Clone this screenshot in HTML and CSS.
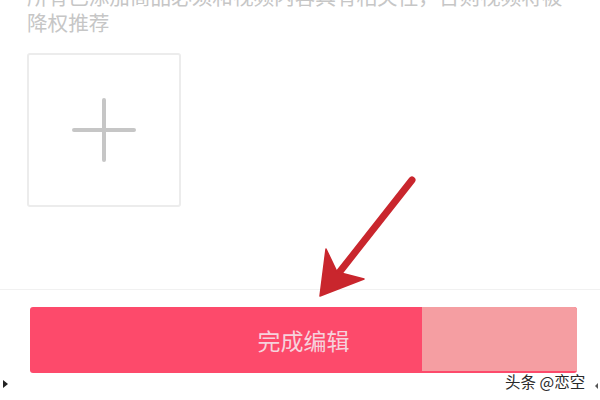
FILE: index.html
```html
<!DOCTYPE html>
<html lang="zh">
<head>
<meta charset="utf-8">
<link rel="stylesheet" href="styles.css">
</head>
<body>
<div class="page">
  <div class="content">
    <p class="desc">所有已添加商品必须和视频内容具有相关性，否则视频将被<br>降权推荐</p>
    <div class="upload">
      <svg class="plus" width="64" height="64" viewBox="0 0 64 64">
        <path d="M32 2 V62 M2 32 H62" stroke="#c6c6c6" stroke-width="4" stroke-linecap="round" fill="none"/>
      </svg>
    </div>
  </div>
  <div class="divider"></div>
  <div class="footer">
    <button class="done">完成编辑<span class="patch"></span></button>
  </div>
  <span class="watermark">头条 @恋空</span>
  <span class="mark mark-left"></span>
  <span class="mark mark-right"></span>
  <svg class="arrow" width="600" height="400" viewBox="0 0 600 400">
    <path d="M412 180 L338 274" stroke="#c9262d" stroke-width="7" stroke-linecap="round" fill="none"/>
    <path d="M320 296 L326 249 L337 272 L364 279 Z" fill="#c9262d" stroke="#c9262d" stroke-width="1.5" stroke-linejoin="round"/>
  </svg>
</div>
</body>
</html>
```
FILE: styles.css
```css
html, body {
  margin: 0;
  padding: 0;
  background: #ffffff;
}
.page {
  position: relative;
  width: 600px;
  height: 400px;
  overflow: hidden;
  font-family: "Noto Sans CJK SC", "Noto Sans", sans-serif;
}
.content {
  padding-left: 27px;
}
.desc {
  margin: -17px 0 0 0;
  font-size: 20.6px;
  line-height: 26px;
  color: #c6c6c6;
  white-space: nowrap;
}
.upload {
  margin-top: 18px;
  width: 150px;
  height: 150px;
  border: 2px solid #ececec;
  border-radius: 3px;
  display: flex;
  align-items: center;
  justify-content: center;
}
.divider {
  margin-top: 82px;
  height: 1px;
  background: #f1f1f1;
}
.footer {
  padding: 17px 22px 0 30px;
}
.done {
  position: relative;
  display: flex;
  align-items: center;
  justify-content: center;
  width: 547px;
  height: 66px;
  border: none;
  border-radius: 3px;
  background: #fd4a6b;
  color: #f6d2dc;
  font-family: "Noto Sans CJK SC", sans-serif;
  font-size: 23px;
  padding: 0;
  overflow: hidden;
}
.patch {
  position: absolute;
  top: 0;
  right: 0;
  width: 155px;
  height: 64px;
  background: #f59ea2;
}
.watermark {
  position: absolute;
  left: 505px;
  top: 370px;
  font-size: 15.5px;
  line-height: 22px;
  color: #2a2a2a;
  text-shadow: 0 0 2px #ffffff, 0 0 2px #ffffff;
}
.mark {
  position: absolute;
  width: 0;
  height: 0;
}
.mark-left {
  left: 3px;
  top: 380px;
  border-left: 5px solid #222;
  border-top: 4px solid transparent;
  border-bottom: 4px solid transparent;
}
.mark-right {
  left: 595px;
  top: 383px;
  border-right: 3px solid #555;
  border-top: 3px solid transparent;
  border-bottom: 3px solid transparent;
}
.arrow {
  position: absolute;
  left: 0;
  top: 0;
  pointer-events: none;
}
```
